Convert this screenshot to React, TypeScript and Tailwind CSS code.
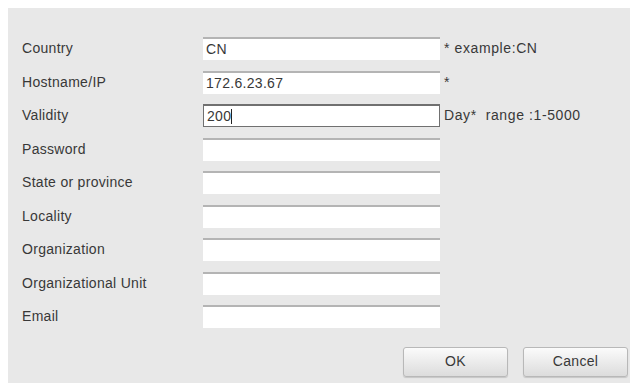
import React from 'react'

const rows: { label: string; value?: string; hint?: string; focused?: boolean }[] = [
  { label: 'Country', value: 'CN', hint: '* example:CN' },
  { label: 'Hostname/IP', value: '172.6.23.67', hint: '*' },
  { label: 'Validity', value: '200', hint: 'Day*  range :1-5000', focused: true },
  { label: 'Password' },
  { label: 'State or province' },
  { label: 'Locality' },
  { label: 'Organization' },
  { label: 'Organizational Unit' },
  { label: 'Email' },
]

export default function App() {
  return (
    <div
      className="w-[643px] h-[387px] bg-white pt-2 pl-2 text-[14px] tracking-[0.3px] text-[#383838]"
      style={{ fontFamily: '"Liberation Sans", Arial, sans-serif' }}
    >
      <div className="w-[622px] h-[375px] bg-[#e8e8e8] pt-[29px] pl-[14px] flex flex-col">
        {rows.map((r) => (
          <div key={r.label} className="flex items-start h-[33.5px]">
            <div className="w-[181px] h-[23px] flex items-center">{r.label}</div>
            <div
              className={
                'w-[237px] h-[23px] bg-white flex items-center pl-[3px] border-t-2 ' +
                (r.focused ? 'border border-t-2 border-[#707070]' : 'border-[#b4b4b4]')
              }
            >
              {r.value && <span>{r.value}</span>}
              {r.focused && <span className="w-px h-[15px] bg-[#222]" />}
            </div>
            {r.hint && (
              <div className="h-[23px] flex items-center pl-[4px] whitespace-pre tracking-[0.6px]">{r.hint}</div>
            )}
          </div>
        ))}
        <div className="flex justify-end gap-[15px] pr-[2px] mt-[8px]">
          <button className="w-[105px] h-[30px] rounded-[3px] border border-[#b8b8b8] bg-gradient-to-b from-[#fbfbfb] to-[#dcdcdc] text-[14px] text-[#383838] shadow-[0_1px_1px_rgba(0,0,0,0.15)]">
            OK
          </button>
          <button className="w-[105px] h-[30px] rounded-[3px] border border-[#b8b8b8] bg-gradient-to-b from-[#fbfbfb] to-[#dcdcdc] text-[14px] text-[#383838] shadow-[0_1px_1px_rgba(0,0,0,0.15)]">
            Cancel
          </button>
        </div>
      </div>
    </div>
  )
}
